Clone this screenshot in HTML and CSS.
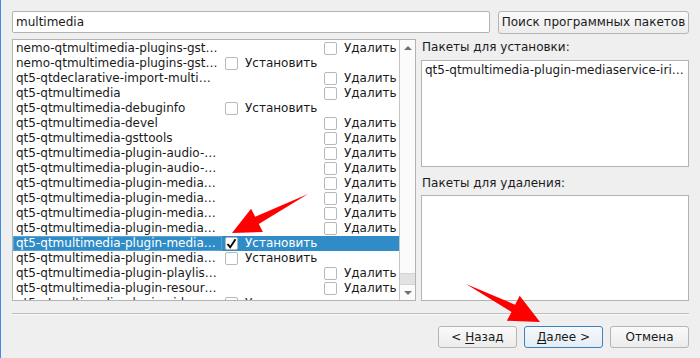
FILE: index.html
```html
<!DOCTYPE html>
<html lang="ru">
<head>
<meta charset="utf-8">
<link rel="stylesheet" href="styles.css">
</head>
<body>
<div class="window">
  <div class="search-row">
    <div class="input">multimedia</div>
    <div class="btn search-btn">Поиск программных пакетов</div>
  </div>
  <div class="main">
    <div class="list">
      <div class="rows">
        <div class="row"><span class="name">nemo-qtmultimedia-plugins-gst…</span><span class="cell"></span><span class="cell"><span class="cb"></span>Удалить</span></div>
        <div class="row"><span class="name">nemo-qtmultimedia-plugins-gst…</span><span class="cell"><span class="cb"></span>Установить</span><span class="cell"></span></div>
        <div class="row"><span class="name">qt5-qtdeclarative-import-multi…</span><span class="cell"></span><span class="cell"><span class="cb"></span>Удалить</span></div>
        <div class="row"><span class="name">qt5-qtmultimedia</span><span class="cell"></span><span class="cell"><span class="cb"></span>Удалить</span></div>
        <div class="row"><span class="name">qt5-qtmultimedia-debuginfo</span><span class="cell"><span class="cb"></span>Установить</span><span class="cell"></span></div>
        <div class="row"><span class="name">qt5-qtmultimedia-devel</span><span class="cell"></span><span class="cell"><span class="cb"></span>Удалить</span></div>
        <div class="row"><span class="name">qt5-qtmultimedia-gsttools</span><span class="cell"></span><span class="cell"><span class="cb"></span>Удалить</span></div>
        <div class="row"><span class="name">qt5-qtmultimedia-plugin-audio-…</span><span class="cell"></span><span class="cell"><span class="cb"></span>Удалить</span></div>
        <div class="row"><span class="name">qt5-qtmultimedia-plugin-audio-…</span><span class="cell"></span><span class="cell"><span class="cb"></span>Удалить</span></div>
        <div class="row"><span class="name">qt5-qtmultimedia-plugin-media…</span><span class="cell"></span><span class="cell"><span class="cb"></span>Удалить</span></div>
        <div class="row"><span class="name">qt5-qtmultimedia-plugin-media…</span><span class="cell"></span><span class="cell"><span class="cb"></span>Удалить</span></div>
        <div class="row"><span class="name">qt5-qtmultimedia-plugin-media…</span><span class="cell"></span><span class="cell"><span class="cb"></span>Удалить</span></div>
        <div class="row"><span class="name">qt5-qtmultimedia-plugin-media…</span><span class="cell"></span><span class="cell"><span class="cb"></span>Удалить</span></div>
        <div class="row selected"><span class="name">qt5-qtmultimedia-plugin-media…</span><span class="cell"><span class="cb"><svg width="11" height="11" viewBox="0 0 11 11"><path d="M1.5 6 L4.2 9.2 L9.5 1.2" fill="none" stroke="#000" stroke-width="1.8"/></svg></span>Установить</span><span class="cell"></span></div>
        <div class="row"><span class="name">qt5-qtmultimedia-plugin-media…</span><span class="cell"><span class="cb"></span>Установить</span><span class="cell"></span></div>
        <div class="row"><span class="name">qt5-qtmultimedia-plugin-playlis…</span><span class="cell"></span><span class="cell"><span class="cb"></span>Удалить</span></div>
        <div class="row"><span class="name">qt5-qtmultimedia-plugin-resour…</span><span class="cell"></span><span class="cell"><span class="cb"></span>Удалить</span></div>
        <div class="row"><span class="name">qt5-qtmultimedia-plugin-video…</span><span class="cell"><span class="cb"></span>Установить</span><span class="cell"></span></div>
      </div>
      <div class="scrollbar">
        <div class="arrow up"></div>
        <div class="track"><div class="thumb"></div></div>
        <div class="arrow down"></div>
      </div>
    </div>
    <div class="side">
      <div class="label first">Пакеты для установки:</div>
      <div class="box box1"><div class="box-item">qt5-qtmultimedia-plugin-mediaservice-iri…</div></div>
      <div class="label second">Пакеты для удаления:</div>
      <div class="box box2"></div>
    </div>
  </div>
  <div class="separator"></div>
  <div class="buttons">
    <div class="btn nav-btn">&lt; <u>Н</u>азад</div>
    <div class="btn nav-btn focused"><u>Д</u>алее &gt;</div>
    <div class="btn nav-btn">Отмена</div>
  </div>
</div>
<svg class="annotations" width="700" height="358" viewBox="0 0 700 358">
  <polygon fill="#ff0000" points="308,194 255.2,216.7 251.1,208.7 232,233 262.9,231.9 258.8,223.9"/>
  <polygon fill="#ff0000" points="466,284 515.1,304.7 519.7,295.8 540,322 506.9,320.8 511.5,311.9"/>
</svg>
</body>
</html>
```

FILE: styles.css
```css
* { box-sizing: border-box; }
html, body {
  margin: 0;
  padding: 0;
  width: 700px;
  height: 358px;
  overflow: hidden;
  background: #efefef;
  font-family: "DejaVu Sans", "Liberation Sans", sans-serif;
  font-size: 12px;
  color: #1a1a1a;
}
body { position: relative; }
.window {
  height: 358px;
  border-left: 1px solid #3d8ee6;
  padding: 11px 11px 0 11px;
  display: flex;
  flex-direction: column;
}
.search-row {
  display: flex;
  gap: 8px;
  height: 23px;
}
.input {
  flex: 1;
  height: 22px;
  background: #fff;
  border: 1px solid #b3b3b3;
  border-radius: 2px;
  padding: 0 3px;
  line-height: 20px;
}
.btn {
  border: 1px solid #b5b5b5;
  border-radius: 3px;
  background: linear-gradient(#fafafa, #ececec);
  text-align: center;
  line-height: 21px;
  height: 23px;
  white-space: nowrap;
}
.search-btn { width: 191px; }
.main {
  display: flex;
  gap: 5px;
  margin-top: 5px;
  height: 262px;
}
.list {
  width: 404px;
  height: 262px;
  border: 1px solid #b3b3b3;
  background: #fff;
  display: flex;
  overflow: hidden;
}
.rows {
  flex: 1;
  overflow: hidden;
  padding-top: 1px;
}
.row {
  display: grid;
  grid-template-columns: 209px 99px 1fr;
  height: 15px;
  line-height: 15px;
  white-space: nowrap;
}
.name { padding-left: 3px; overflow: hidden; }
.cell {
  display: flex;
  align-items: center;
  gap: 7px;
  padding-left: 3px;
}
.cb {
  width: 13px;
  height: 13px;
  border: 1px solid #b8b8b8;
  border-radius: 2px;
  background: #fff;
  flex: none;
  display: flex;
  align-items: center;
  justify-content: center;
}
.row.selected {
  background: #308cc6;
  color: #fff;
}
.row.selected .name {
  outline: 1px solid #5aa3d3;
  outline-offset: -1px;
}
.scrollbar {
  width: 16px;
  border-left: 1px solid #c4c4c4;
  display: flex;
  flex-direction: column;
  background: #fbfbfb;
}
.arrow {
  height: 15px;
  display: flex;
  align-items: center;
  justify-content: center;
}
.arrow.up::before {
  content: "";
  border-left: 4px solid transparent;
  border-right: 4px solid transparent;
  border-bottom: 4px solid #707070;
}
.arrow.down::before {
  content: "";
  border-left: 4px solid transparent;
  border-right: 4px solid transparent;
  border-top: 4px solid #707070;
}
.track {
  flex: 1;
  display: flex;
  flex-direction: column;
  justify-content: flex-end;
}
.thumb {
  height: 12px;
  background: #e2e2e2;
  border-top: 1px solid #d4d4d4;
  border-bottom: 1px solid #d4d4d4;
}
.side {
  flex: 1;
  display: flex;
  flex-direction: column;
}
.label {
  padding-left: 1px;
  white-space: nowrap;
}
.label.first { height: 21px; line-height: 17px; }
.label.second { height: 28px; line-height: 32px; }
.box {
  background: #fff;
  border: 1px solid #b3b3b3;
}
.box1 { height: 107px; }
.box2 { flex: 1; }
.box-item {
  padding: 2px 3px;
  line-height: 15px;
  white-space: nowrap;
  overflow: hidden;
}
.separator {
  margin-top: 12px;
  height: 2px;
  border-top: 1px solid #bcbcbc;
  border-bottom: 1px solid #fbfbfb;
}
.buttons {
  margin-top: 11px;
  display: flex;
  justify-content: flex-end;
  gap: 7px;
}
.nav-btn {
  width: 79px;
  height: 22px;
  line-height: 20px;
}
.nav-btn u { text-decoration-thickness: 1px; text-underline-offset: 2px; }
.nav-btn.focused {
  border-color: #3b82bf;
  background: linear-gradient(#f6f9fc, #e4ecf3);
}
.annotations {
  position: absolute;
  top: 0;
  left: 0;
  pointer-events: none;
}
```
